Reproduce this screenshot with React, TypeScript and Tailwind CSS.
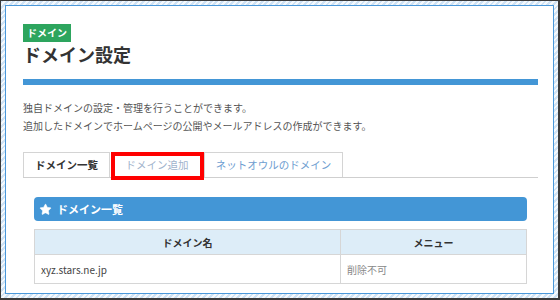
import { Star } from 'lucide-react';

const font = { fontFamily: '"Noto Sans CJK JP", "Noto Sans", sans-serif' };

export default function App() {
  return (
    <div
      className="w-[560px] h-[300px] border-t border-l border-r-2 border-b-2 border-[#3a3a3a] p-[4px] bg-[repeating-linear-gradient(135deg,#cfe2f4_0px,#cfe2f4_2px,#f4f9fd_2px,#f4f9fd_4px)]"
      style={font}
    >
      <div className="h-full bg-white border border-[#4a98da] pt-[18px] pl-[17px] pr-[15px]">
        {/* heading */}
        <div className="flex w-fit items-center h-[18px] px-1 bg-[#2da55e] text-white text-[10px] font-bold leading-none">
          ドメイン
        </div>
        <h1 className="text-[18px] leading-[24px] font-bold text-[#333]">ドメイン設定</h1>
        <div className="mt-[13px] h-[6px] bg-[#4396d6]" />

        <p className="mt-[14px] text-[10px] leading-[18px] text-[#555]">
          独自ドメインの設定・管理を行うことができます。
          <br />
          追加したドメインでホームページの公開やメールアドレスの作成ができます。
        </p>

        {/* tabs */}
        <div className="mt-[17px] flex gap-[3px] border-b border-[#cfcfcf] text-[10.5px]">
          <div className="w-[87px] h-[25px] flex items-center justify-center border border-b-0 border-[#d4d4d4] font-bold text-[#333]">
            ドメイン一覧
          </div>
          <div className="relative w-[88px] h-[25px] flex items-center justify-center border border-b-0 border-[#d4d4d4] text-[#9fb3cc]">
            ドメイン追加
            <div className="absolute -left-[3px] -right-[4px] -top-[1px] -bottom-[3px] border-4 border-[#ff0000]" />
          </div>
          <div className="w-[139px] h-[25px] flex items-center justify-center border border-b-0 border-[#d4d4d4] text-[#6d9dd0]">
            ネットオウルのドメイン
          </div>
        </div>

        {/* domain list */}
        <div className="px-[11px] pt-[19px]">
          <div className="h-[24px] flex items-center gap-[5px] pl-[5px] rounded-sm bg-[#4396d6] text-white text-[11px] font-bold">
            <Star size={13} fill="white" strokeWidth={1} />
            <span>ドメイン一覧</span>
          </div>
          <table className="mt-[8px] w-full border-collapse text-[10px]">
            <thead>
              <tr className="h-[25px] bg-[#ddedf8] text-[#333] font-bold">
                <th className="w-[306px] border border-[#d6d6d6] font-bold">ドメイン名</th>
                <th className="border border-[#d6d6d6] font-bold">メニュー</th>
              </tr>
            </thead>
            <tbody>
              <tr className="h-[29px]">
                <td className="border border-[#d6d6d6] pl-[6px] text-[#444]">xyz.stars.ne.jp</td>
                <td className="border border-[#d6d6d6] pl-[6px] text-[#888]">削除不可</td>
              </tr>
            </tbody>
          </table>
        </div>
      </div>
    </div>
  );
}
